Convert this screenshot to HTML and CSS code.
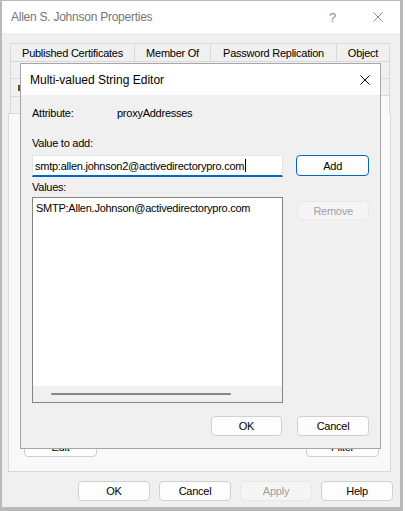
FILE: index.html
```html
<!DOCTYPE html>
<html lang="en">
<head>
  <meta charset="UTF-8">
  <meta name="viewport" content="width=device-width, initial-scale=1.0">
  <title>Allen S. Johnson Properties</title>
  <link rel="stylesheet" href="styles.css">
</head>
<body>
<div class="window">
  <div class="titlebar">
    <div class="title">Allen S. Johnson Properties</div>
    <div class="caption-btn help">?</div>
    <div class="caption-btn">
      <svg width="10" height="10" viewBox="0 0 10 10"><path d="M0.5 0.5 L9.5 9.5 M9.5 0.5 L0.5 9.5" stroke="#8a8a8a" stroke-width="1" fill="none"/></svg>
    </div>
  </div>

  <div class="content">
    <!-- rows 2-4 sit under the editor dialog, so only their outlines show -->
    <div class="tabs">
      <div class="tab-row row-a">
        <div class="tab" style="width:124px">Published Certificates</div>
        <div class="tab" style="width:76px">Member Of</div>
        <div class="tab" style="width:126px">Password Replication</div>
        <div class="tab last" style="width:54px">Object</div>
      </div>
      <div class="tab-row row-b">
        <div class="tab" style="width:80px"></div>
        <div class="tab" style="width:90px"></div>
        <div class="tab" style="width:90px"></div>
        <div class="tab last" style="width:120px"></div>
      </div>
      <div class="tab-row row-a">
        <div class="tab" style="width:60px"><span class="tick"></span></div>
        <div class="tab" style="width:60px"></div>
        <div class="tab" style="width:60px"></div>
        <div class="tab" style="width:55px"></div>
        <div class="tab" style="width:70px"></div>
        <div class="tab last" style="width:75px"></div>
      </div>
      <div class="tab-row row-b">
        <div class="tab" style="width:170px"></div>
        <div class="tab" style="width:60px"></div>
        <div class="tab last selected" style="width:150px"></div>
      </div>
    </div>

    <div class="panel">
      <div class="panel-buttons">
        <div class="btn wide">Edit</div>
        <div class="btn wide">Filter</div>
      </div>
    </div>

    <div class="footer">
      <div class="btn wide">OK</div>
      <div class="btn wide">Cancel</div>
      <div class="btn wide disabled">Apply</div>
      <div class="btn wide">Help</div>
    </div>
  </div>

  <!-- modal editor on top of the property sheet -->
  <div class="dialog">
    <div class="dialog-titlebar">
      <div class="dialog-title">Multi-valued String Editor</div>
      <svg width="10" height="10" viewBox="0 0 10 10"><path d="M0.5 0.5 L9.5 9.5 M9.5 0.5 L0.5 9.5" stroke="#000" stroke-width="1" fill="none"/></svg>
    </div>
    <div class="dialog-body">
      <div class="attr-row">
        <span class="attr-label">Attribute:</span>
        <span>proxyAddresses</span>
      </div>
      <div class="field-label first">Value to add:</div>
      <div class="input-row">
        <div class="textbox">smtp:allen.johnson2@activedirectorypro.com<span class="caret"></span></div>
        <div class="btn side default">Add</div>
      </div>
      <div class="field-label">Values:</div>
      <div class="list-row">
        <div class="listbox">
          <div class="list-item">SMTP:Allen.Johnson@activedirectorypro.com</div>
          <div class="hscroll"><div class="thumb"></div></div>
        </div>
        <div class="btn side remove disabled">Remove</div>
      </div>
      <div class="dialog-footer">
        <div class="btn ok">OK</div>
        <div class="btn cancel">Cancel</div>
      </div>
    </div>
  </div>
</div>
</body>
</html>
```

FILE: styles.css
```css
* {
  box-sizing: border-box;
}

html, body {
  margin: 0;
  background: #fff;
}

body {
  font-family: "Liberation Sans", Arial, sans-serif;
  font-size: 11px;
  letter-spacing: -0.25px;
  color: #000;
}

.window {
  position: relative;
  width: 403px;
  height: 511px;
  border: solid #b9b9b9;
  border-width: 1px 3px 4px 2px;
  background: #f0f0f0;
}

.titlebar {
  height: 32px;
  background: #fff;
  display: flex;
  align-items: center;
  padding-left: 9px;
}

.titlebar .title {
  flex: 1;
  font-size: 12px;
  color: #767676;
}

.caption-btn {
  width: 45px;
  height: 32px;
  display: flex;
  align-items: center;
  justify-content: center;
  color: #8a8a8a;
}

.caption-btn.help {
  font-size: 13px;
}

.content {
  height: 474px;
  padding: 10px 0 6px 8px;
}

.tab-row {
  display: flex;
}

.row-a {
  height: 18px;
}

.row-b {
  height: 17px;
}

.tab {
  border-top: 1px solid #d9d9d9;
  border-left: 1px solid #d9d9d9;
  display: flex;
  align-items: center;
  justify-content: center;
  white-space: nowrap;
  overflow: hidden;
}

.tab.last {
  border-right: 1px solid #d9d9d9;
}

/* sliver of a hidden label just left of the dialog */
.tab .tick {
  width: 2px;
  height: 6px;
  margin-right: auto;
  margin-left: 7px;
  background: #6b4a2a;
}

.tab.selected {
  position: relative;
  background: #f9f9f9;
  margin-top: -1px;
  height: 19px;
  margin-bottom: -1px;
}

.panel {
  margin-left: -2px;
  width: 383px;
  height: 359px;
  border: 1px solid #d9d9d9;
  background: #f9f9f9;
  display: flex;
  flex-direction: column;
  justify-content: flex-end;
  padding: 0 11px 14px 15px;
}

.panel-buttons {
  display: flex;
  justify-content: space-between;
}

.footer {
  margin-top: 9px;
  display: flex;
  justify-content: flex-end;
  gap: 9px;
  padding-right: 7px;
}

.btn {
  height: 20px;
  border: 1px solid #d0d0d0;
  border-radius: 4px;
  background: #fdfdfd;
  display: flex;
  align-items: center;
  justify-content: center;
}

.btn.wide {
  width: 72px;
}

.panel-buttons .btn.wide {
  width: 73px;
}

.btn.disabled {
  background: #f5f5f5;
  border-color: #e8e8e8;
  color: #a0a0a0;
}

.btn.default {
  border-color: #0067c0;
}

/* editor dialog */
.dialog {
  position: absolute;
  left: 18px;
  top: 62px;
  width: 361px;
  height: 386px;
  border: 1px solid #a6a6a6;
  background: #f0f0f0;
}

.dialog-titlebar {
  height: 31px;
  background: #fff;
  display: flex;
  align-items: center;
  padding: 0 10px 0 9px;
}

.dialog-title {
  flex: 1;
  font-size: 12px;
  letter-spacing: 0;
}

.dialog-body {
  padding: 11px 11px 0 11px;
}

.attr-row {
  height: 14px;
  line-height: 14px;
  display: flex;
}

.attr-label {
  width: 85px;
}

.field-label {
  height: 14px;
  line-height: 14px;
  margin-top: 3px;
}

.field-label.first {
  margin-top: 16px;
}

.input-row {
  margin-top: 5px;
  display: flex;
}

.textbox {
  width: 252px;
  height: 22px;
  background: #fff;
  border: 1px solid #e3e3e3;
  border-bottom: 2px solid #0067c0;
  display: flex;
  align-items: center;
  padding-left: 2px;
  white-space: nowrap;
}

.caret {
  display: inline-block;
  width: 1px;
  height: 13px;
  margin-left: 1px;
  background: #000;
}

.btn.side {
  width: 73px;
  height: 21px;
  margin-left: 13px;
}

.btn.remove {
  width: 72px;
  height: 19px;
  margin-left: 14px;
  margin-top: 4px;
}

.list-row {
  margin-top: 3px;
  display: flex;
  align-items: flex-start;
}

.listbox {
  width: 252px;
  height: 206px;
  border: 1px solid #848484;
  background: #fff;
  display: flex;
  flex-direction: column;
}

.list-item {
  padding: 3px 3px 0 3px;
  line-height: 14px;
  white-space: nowrap;
}

.hscroll {
  margin-top: auto;
  height: 16px;
  background: #f0f0f0;
  padding-top: 7px;
}

.hscroll .thumb {
  margin-left: 18px;
  width: 180px;
  height: 2px;
  border-radius: 1px;
  background: #868686;
}

.dialog-footer {
  margin-top: 13px;
  display: flex;
  justify-content: flex-end;
}

.btn.ok {
  width: 71px;
}

.btn.cancel {
  width: 72px;
  margin-left: 15px;
}
```
